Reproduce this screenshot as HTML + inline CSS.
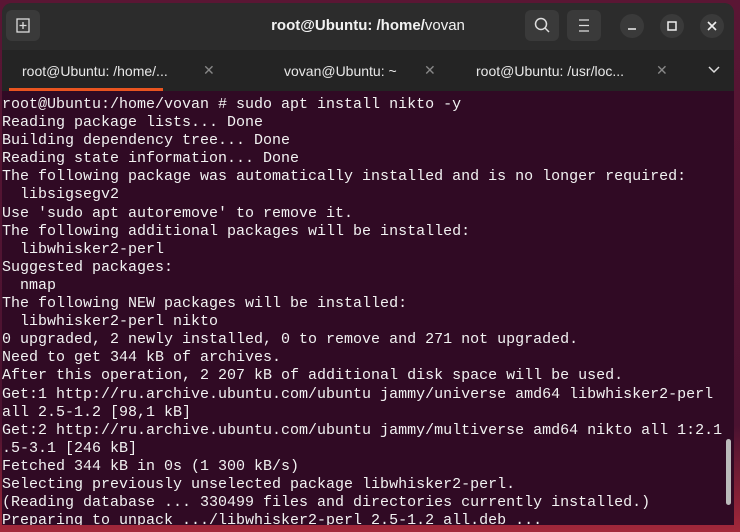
<!DOCTYPE html>
<html><head><style>
body{margin:0;width:740px;height:532px;overflow:hidden;background:linear-gradient(180deg,#5a1634 0%,#4a1230 80%,#a3283a 100%);position:relative;font-family:"Liberation Sans",sans-serif}
.win{position:absolute;left:2px;top:3px;width:732px;height:522px;background:#2c2c2c;border-radius:10px 10px 0 0;overflow:hidden}
.hb{position:absolute;left:0;top:0;width:732px;height:47px;background:#2c2c2c}
.title{position:absolute;left:0;width:732px;top:14px;text-align:center;color:#f2f2f2;font-size:15px;font-weight:bold}
.title span{font-weight:normal}
.btn{position:absolute;top:7px;width:34px;height:31px;background:#3a3a3a;border-radius:6px}
.circ{position:absolute;top:11px;width:24px;height:24px;border-radius:50%;background:#3a3a3a;color:#eee;text-align:center;font-size:13px;line-height:24px}
.tabs{position:absolute;left:0;top:47px;width:732px;height:41px;background:#242424}
.tab{position:absolute;top:13px;color:#e8e8e8;font-size:14px}
.x{position:absolute;top:12px;color:#888;font-size:14px}
.ul{position:absolute;left:7px;top:38px;width:154px;height:3px;background:#e95420}
.term{position:absolute;left:0;top:88px;width:732px;height:434px;background:#300a24}
pre{margin:0;position:absolute;left:0;top:5px;font-family:"Liberation Mono",monospace;font-size:15px;line-height:18.1px;color:#f2f2f2}
.sb{position:absolute;left:724px;top:348px;width:5px;height:66px;background:#bbb;border-radius:3px}
</style></head><body>
<div class="win">
<div class="hb">
<div class="btn" style="left:4px"><svg width="34" height="31"><rect x="11" y="9" width="12" height="13" fill="none" stroke="#ddd" stroke-width="1.3"/><path d="M17 12v7M13.5 15.5h7" stroke="#ddd" stroke-width="1.3"/></svg></div>
<div class="title">root@Ubuntu: /home/<span>vovan</span></div>
<div class="btn" style="left:523px"><svg width="34" height="31"><circle cx="16" cy="14" r="5.5" fill="none" stroke="#ddd" stroke-width="1.5"/><path d="M20 18l4 4" stroke="#ddd" stroke-width="1.5"/></svg></div>
<div class="btn" style="left:565px"><svg width="34" height="31"><path d="M12 10h10M12 15.5h10M12 21h10" stroke="#ddd" stroke-width="1.3"/></svg></div>
<div class="circ" style="left:618px"><svg width="24" height="24"><path d="M8 15h8" stroke="#eee" stroke-width="1.5"/></svg></div>
<div class="circ" style="left:658px"><svg width="24" height="24"><rect x="8" y="8" width="8" height="8" fill="none" stroke="#eee" stroke-width="1.5"/></svg></div>
<div class="circ" style="left:698px"><svg width="24" height="24"><path d="M8 8l8 8M16 8l-8 8" stroke="#eee" stroke-width="1.6"/></svg></div>
</div>
<div class="tabs">
<div class="tab" style="left:20px">root@Ubuntu: /home/...</div><div class="x" style="left:201px">✕</div>
<div class="tab" style="left:282px">vovan@Ubuntu: ~</div><div class="x" style="left:422px">✕</div>
<div class="tab" style="left:474px">root@Ubuntu: /usr/loc...</div><div class="x" style="left:654px">✕</div>
<div class="x" style="left:706px;color:#ddd"><svg width="12" height="12"><path d="M1 4l5 5 5-5" fill="none" stroke="#ddd" stroke-width="1.5"/></svg></div>
<div class="ul"></div>
</div>
<div class="term"><pre>root@Ubuntu:/home/vovan # sudo apt install nikto -y
Reading package lists... Done
Building dependency tree... Done
Reading state information... Done
The following package was automatically installed and is no longer required:
  libsigsegv2
Use 'sudo apt autoremove' to remove it.
The following additional packages will be installed:
  libwhisker2-perl
Suggested packages:
  nmap
The following NEW packages will be installed:
  libwhisker2-perl nikto
0 upgraded, 2 newly installed, 0 to remove and 271 not upgraded.
Need to get 344 kB of archives.
After this operation, 2 207 kB of additional disk space will be used.
Get:1 http://ru.archive.ubuntu.com/ubuntu jammy/universe amd64 libwhisker2-perl
all 2.5-1.2 [98,1 kB]
Get:2 http://ru.archive.ubuntu.com/ubuntu jammy/multiverse amd64 nikto all 1:2.1
.5-3.1 [246 kB]
Fetched 344 kB in 0s (1 300 kB/s)
Selecting previously unselected package libwhisker2-perl.
(Reading database ... 330499 files and directories currently installed.)
Preparing to unpack .../libwhisker2-perl 2.5-1.2 all.deb ...</pre><div class="sb"></div></div>
</div>
</body></html>
